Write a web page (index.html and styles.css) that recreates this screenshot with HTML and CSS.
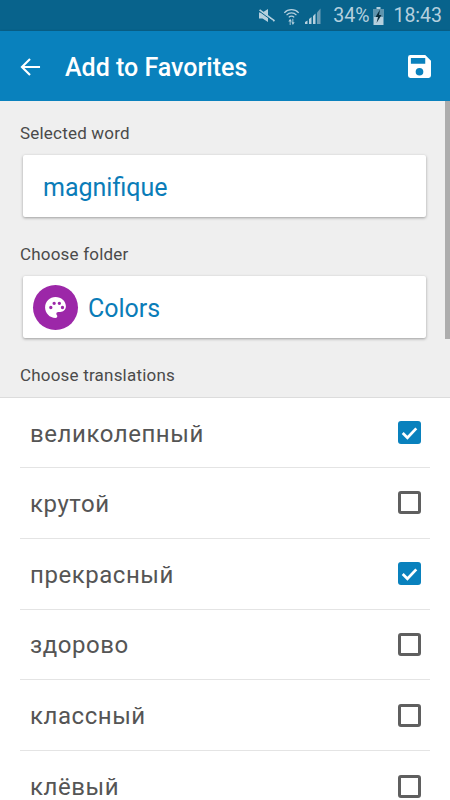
FILE: index.html
```html
<!DOCTYPE html>
<html lang="en">
<head>
  <meta charset="UTF-8">
  <meta name="viewport" content="width=device-width, initial-scale=1.0">
  <title>Add to Favorites</title>
  <link rel="stylesheet" href="styles.css">
</head>
<body>

<div class="status-bar">
  <svg class="st-mute" viewBox="0 0 18 14"><path d="M1 4h3.500L10 .5v13L4.500 10H1z" fill="#b5d0de"/><path d="M1.500 1.500l15 11" stroke="#b5d0de" stroke-width="1.800" fill="none"/><path d="M0 1.800l15 11" stroke="#08638c" stroke-width="1" fill="none"/></svg>
  <svg class="st-wifi" viewBox="0 0 18 20"><path d="M1 6.500a11 11 0 0 1 16 0M3.500 9a7.500 7.500 0 0 1 11 0M6 11.500a4 4 0 0 1 6 0" stroke="#b5d0de" stroke-width="1.400" fill="none"/><path d="M7 20v-4H5.500L7.500 13l2 3H8v4zM10 13h1v4h1.500l-2 3-1.500-3H10z" fill="#b5d0de"/></svg>
  <svg class="st-signal" viewBox="0 0 17 16"><path d="M0 16v-2l2.500-1.500V16zM4 16v-5l2.500-2v7zM8 16V8l2.500-2.500V16z" fill="#b5d0de"/><path d="M12 16V4.500L15.500.5V16z" fill="#6d9db5"/></svg>
  <span class="st-text st-percent">34%</span>
  <svg class="st-battery" viewBox="0 0 12 18"><path d="M4 0h4v2h3v16H1V2h3z" fill="#b5d0de"/><path d="M1 2h10v8H1z" fill="#5f94ad"/><path d="M7.500 2.500L3 10h2.500L4 16l5-8H6.500z" fill="#0b2c3b"/></svg>
  <span class="st-text st-time">18:43</span>
</div>

<header class="toolbar">
  <svg class="back-icon" viewBox="0 0 22 20"><path d="M21 10H2M10.500 1.500L2 10l8.500 8.500" stroke="#fff" stroke-width="2.200" fill="none"/></svg>
  <h1 class="title">Add to Favorites</h1>
  <svg class="save-icon" viewBox="0 0 24 24"><path fill-rule="evenodd" d="M2.500 0H18l6 6v15.500a2.500 2.500 0 0 1-2.500 2.500h-19A2.500 2.500 0 0 1 0 21.500v-19A2.500 2.500 0 0 1 2.500 0zM3 3v6h15V3zM12 13.500a4 4 0 1 0 0 8 4 4 0 0 0 0-8z" fill="#fff"/></svg>
</header>

<main class="content">
  <div class="top-section">
    <div class="label label-word">Selected word</div>
    <div class="card card-word">magnifique</div>
    <div class="label label-folder">Choose folder</div>
    <div class="card card-folder">
      <span class="folder-icon">
        <svg viewBox="0 0 24 24" width="25" height="25"><path fill-rule="evenodd" d="M12 2C6.500 2 2 6.500 2 12s4.500 10 10 10c1 0 1.700-.8 1.700-1.700 0-.4-.2-.8-.5-1.100-.3-.3-.4-.7-.4-1.100 0-.9.800-1.700 1.700-1.700h2c3.100 0 5.500-2.500 5.500-5.500C22 6 17.500 2 12 2zM5.900 12a1.600 1.600 0 1 1 3.200 0 1.600 1.600 0 0 1-3.200 0zm3.200-4a1.600 1.600 0 1 1 3.200 0 1.600 1.600 0 0 1-3.200 0zm5 0a1.600 1.600 0 1 1 3.200 0 1.600 1.600 0 0 1-3.200 0zm3 4a1.600 1.600 0 1 1 3.200 0 1.600 1.600 0 0 1-3.200 0z" fill="#fff"/></svg>
      </span>
      <span class="folder-name">Colors</span>
    </div>
    <div class="label label-trans">Choose translations</div>
    <div class="scrollbar"></div>
  </div>

  <ul class="list">
    <li class="row"><span>великолепный</span><span class="check checked"><svg viewBox="0 0 22 22"><path d="M4.500 11.500l4.500 4.500 8.500-9" stroke="#fff" stroke-width="2.600" fill="none"/></svg></span></li>
    <li class="row"><span>крутой</span><span class="check"></span></li>
    <li class="row"><span>прекрасный</span><span class="check checked"><svg viewBox="0 0 22 22"><path d="M4.500 11.500l4.500 4.500 8.500-9" stroke="#fff" stroke-width="2.600" fill="none"/></svg></span></li>
    <li class="row"><span>здорово</span><span class="check"></span></li>
    <li class="row"><span>классный</span><span class="check"></span></li>
    <li class="row"><span>клёвый</span><span class="check"></span></li>
  </ul>
</main>

</body>
</html>
```

FILE: styles.css
```css
html, body {
  margin: 0;
  padding: 0;
}

body {
  width: 450px;
  height: 800px;
  overflow: hidden;
  font-family: Roboto, "Noto Sans", sans-serif;
  background-color: #fff;
}

.status-bar {
  height: 31px;
  background-color: #08638c;
  display: flex;
  align-items: center;
  justify-content: flex-end;
  padding-right: 8px;
  color: #b5d0de;
}

.st-text {
  font-size: 19.500px;
}

.st-mute {
  width: 18px;
  height: 15px;
  margin-right: 7px;
}

.st-wifi {
  width: 17px;
  height: 18px;
  margin-right: 5px;
}

.st-signal {
  width: 17px;
  height: 16px;
  margin-right: 11px;
}

.st-battery {
  width: 13px;
  height: 18px;
  margin: 0 8px 0 3px;
}

.toolbar {
  height: 70px;
  background-color: #0981bd;
  display: flex;
  align-items: center;
  padding: 0 18px 0 20px;
  box-shadow: 0 1px 3px rgba(0, 0, 0, 0.3);
  position: relative;
}

.back-icon {
  width: 21px;
  height: 20px;
  margin: 1px 24px 0 0;
}

.title {
  margin: 3px 0 0;
  flex: 1;
  color: #fff;
  font-size: 25px;
  font-weight: 500;
}

.save-icon {
  width: 23px;
  height: 23px;
  margin-right: 1px;
}

.top-section {
  height: 296px;
  background-color: #efefef;
  border-bottom: 1px solid #dcdcdc;
  padding-left: 20px;
  position: relative;
}

.label {
  color: #4a4a4a;
  font-size: 17px;
  line-height: 20px;
  letter-spacing: 0.200px;
}

.label-word {
  padding-top: 22px;
}

.label-folder {
  margin-top: 27px;
}

.label-trans {
  margin-top: 27px;
}

.card {
  box-sizing: border-box;
  width: 403px;
  height: 62px;
  margin: 12px 0 0 3px;
  background-color: #fff;
  border-radius: 2px;
  box-shadow: 0 1px 3px rgba(0, 0, 0, 0.35);
  color: #0a7cb8;
  font-size: 25px;
  display: flex;
  align-items: center;
  padding-top: 2px;
}

.card-word {
  padding-left: 20px;
}

.card-folder {
  padding-left: 10px;
  padding-top: 0;
}

.folder-name {
  padding-top: 2px;
}

.folder-icon {
  width: 45px;
  height: 45px;
  border-radius: 50%;
  background-color: #9c27a8;
  display: flex;
  align-items: center;
  justify-content: center;
  margin-right: 10px;
}

.scrollbar {
  position: absolute;
  top: 0;
  right: 0;
  width: 5px;
  height: 238px;
  background-color: #adadad;
}

.list {
  list-style: none;
  margin: 0;
  padding: 0 20px;
}

.row {
  box-sizing: border-box;
  height: 70.800px;
  padding: 0 9px 0 10px;
  border-bottom: 1px solid #e4e4e4;
  display: flex;
  align-items: center;
  justify-content: space-between;
  color: #555;
  font-size: 24px;
  letter-spacing: 0.550px;
}

.row:first-child {
  height: 70px;
}

.row span:first-child {
  padding-top: 2px;
}

.check {
  box-sizing: border-box;
  width: 23px;
  height: 23px;
  border: 3px solid #5f5f5f;
  border-radius: 3px;
}

.checked {
  background-color: #0981bd;
  border: none;
}

.checked svg {
  display: block;
  width: 23px;
  height: 23px;
}
```
